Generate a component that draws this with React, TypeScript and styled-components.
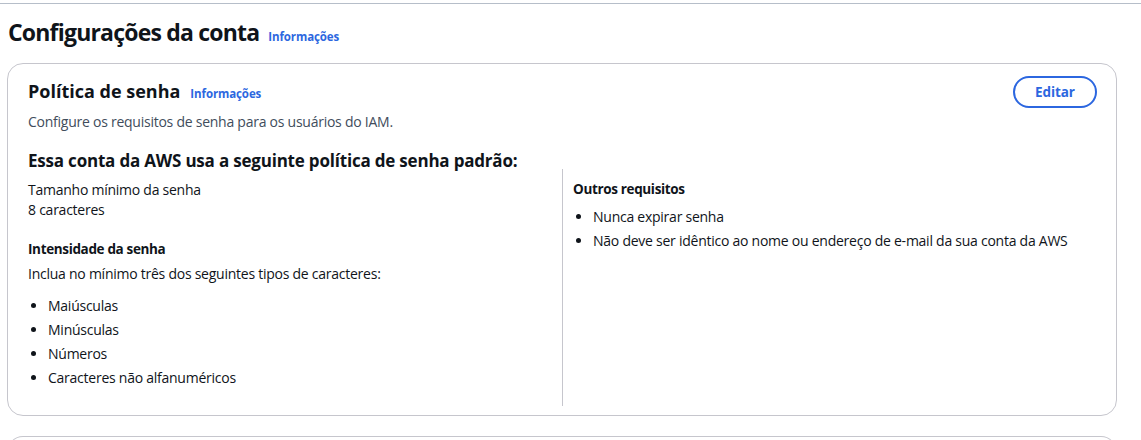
import React from "react";
import styled, { createGlobalStyle } from "styled-components";

const Global = createGlobalStyle`
  html, body { margin: 0; padding: 0; background: #fff; }
  body { font-family: "Open Sans", "Noto Sans", Arial, sans-serif; color: #0f141a; }
  * { box-sizing: border-box; }
`;

const Page = styled.div`
  border-top: 1px solid #b6bec9;
  margin-top: 3px;
  padding: 13px 24px 0 7px;
  display: flex;
  flex-direction: column;
`;

const HeaderRow = styled.div`
  display: flex;
  align-items: baseline;
  gap: 9px;
  padding-left: 1px;
  height: 32px;
`;

const H1 = styled.h1`
  margin: 0;
  font-size: 23px;
  font-weight: 700;
  letter-spacing: -0.8px;
  line-height: 30px;
`;

const InfoLink = styled.a`
  font-size: 11.5px;
  font-weight: 700;
  color: #2c67e0;
  text-decoration: none;
  letter-spacing: -0.1px;
`;

const Card = styled.section`
  margin-top: 14px;
  border: 1px solid #c6c6cd;
  border-radius: 16px;
  padding: 11px 20px 9px 20px;
  display: flex;
  flex-direction: column;
`;

const CardTop = styled.div`
  display: flex;
  justify-content: space-between;
  align-items: flex-start;
`;

const TitleBlock = styled.div`
  display: flex;
  flex-direction: column;
`;

const TitleRow = styled.div`
  display: flex;
  align-items: baseline;
  gap: 10px;
  height: 37px;
  padding-top: 1px;
`;

const H2 = styled.h2`
  margin: 0;
  font-size: 18px;
  font-weight: 700;
  letter-spacing: 0;
  line-height: 30px;
`;

const Desc = styled.p`
  margin: 0;
  font-size: 14px;
  color: #414d5c;
  line-height: 20px;
  letter-spacing: -0.25px;
`;

const EditButton = styled.button`
  margin-top: 1px;
  width: 84px;
  height: 32px;
  border: 2px solid #2c67e0;
  border-radius: 16px;
  background: #fff;
  color: #2c67e0;
  font-family: inherit;
  font-size: 13.5px;
  font-weight: 700;
  letter-spacing: -0.1px;
  margin-right: -1px;
`;

const H3 = styled.h3`
  margin: 20px 0 0 0;
  font-size: 17px;
  font-weight: 700;
  line-height: 18px;
  letter-spacing: -0.2px;
`;

const Columns = styled.div`
  display: grid;
  grid-template-columns: 534px 1fr;
  margin-top: -1px;
`;

const Col = styled.div<{ $divider?: boolean }>`
  display: flex;
  flex-direction: column;
  padding: ${(p) => (p.$divider ? "10px 0 0 10px" : "11px 0 0 0")};
  border-left: ${(p) => (p.$divider ? "1px solid #c6c6cd" : "none")};
  min-height: 237px;
`;

const Text = styled.div<{ $gap?: number }>`
  font-size: 14px;
  line-height: 20px;
  letter-spacing: -0.25px;
  margin-top: ${(p) => p.$gap ?? 0}px;
`;

const Label = styled.div<{ $gap?: number }>`
  font-size: 13.5px;
  font-weight: 700;
  line-height: 20px;
  letter-spacing: -0.35px;
  margin-top: ${(p) => p.$gap ?? 0}px;
`;

const List = styled.ul<{ $gap?: number }>`
  margin: ${(p) => p.$gap ?? 0}px 0 0 0;
  padding: 0 0 0 20px;
  display: flex;
  flex-direction: column;
  gap: 4px;
  font-size: 14px;
  line-height: 20px;
  letter-spacing: -0.25px;
`;

const NextCard = styled.div`
  margin-top: 20px;
  height: 20px;
  border: 1px solid #c6c6cd;
  border-bottom: none;
  border-radius: 16px 16px 0 0;
`;

export default function App() {
  return (
    <>
      <Global />
      <Page>
        <HeaderRow>
          <H1>Configurações da conta</H1>
          <InfoLink href="#">Informações</InfoLink>
        </HeaderRow>
        <Card>
          <CardTop>
            <TitleBlock>
              <TitleRow>
                <H2>Política de senha</H2>
                <InfoLink href="#">Informações</InfoLink>
              </TitleRow>
              <Desc>Configure os requisitos de senha para os usuários do IAM.</Desc>
            </TitleBlock>
            <EditButton>Editar</EditButton>
          </CardTop>
          <H3>Essa conta da AWS usa a seguinte política de senha padrão:</H3>
          <Columns>
            <Col>
              <Text>Tamanho mínimo da senha</Text>
              <Text>8 caracteres</Text>
              <Label $gap={19}>Intensidade da senha</Label>
              <Text $gap={5}>Inclua no mínimo três dos seguintes tipos de caracteres:</Text>
              <List $gap={12}>
                <li>Maiúsculas</li>
                <li>Minúsculas</li>
                <li>Números</li>
                <li>Caracteres não alfanuméricos</li>
              </List>
            </Col>
            <Col $divider>
              <Label>Outros requisitos</Label>
              <List $gap={8}>
                <li>Nunca expirar senha</li>
                <li>Não deve ser idêntico ao nome ou endereço de e-mail da sua conta da AWS</li>
              </List>
            </Col>
          </Columns>
        </Card>
        <NextCard />
      </Page>
    </>
  );
}
